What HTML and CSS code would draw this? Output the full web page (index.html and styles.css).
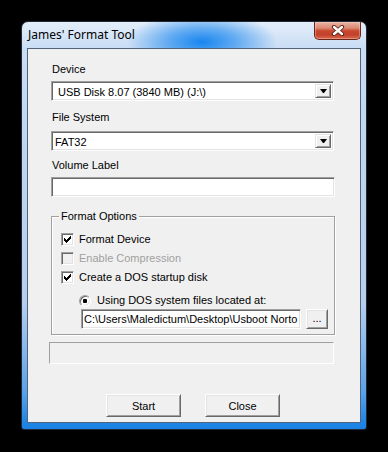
FILE: index.html
```html
<!DOCTYPE html>
<html>
<head>
<meta charset="utf-8">
<title>James' Format Tool</title>
<link rel="stylesheet" href="styles.css">
</head>
<body>
<div class="window">
  <div class="titlebar">
    <span class="title">James' Format Tool</span>
    <div class="close-btn">
      <svg width="14" height="11" viewBox="0 0 14 11">
        <path d="M3 2 L11 9 M11 2 L3 9" stroke="#5a1d14" stroke-width="4.2" stroke-linecap="round" fill="none"/>
        <path d="M3 2 L11 9 M11 2 L3 9" stroke="#ffffff" stroke-width="2.4" stroke-linecap="round" fill="none"/>
      </svg>
    </div>
  </div>
  <div class="client">
    <div class="form">
      <div class="lbl lbl--first">Device</div>
      <div class="combo">
        <span class="combo-text combo-text--device">USB Disk 8.07 (3840 MB) (J:\)</span>
        <span class="drop"><span class="tri"></span></span>
      </div>
      <div class="lbl lbl--fs">File System</div>
      <div class="combo combo--fs">
        <span class="combo-text">FAT32</span>
        <span class="drop"><span class="tri"></span></span>
      </div>
      <div class="lbl lbl--vol">Volume Label</div>
      <div class="edit edit--vol"></div>

      <fieldset class="group">
        <legend class="group-caption">Format Options</legend>
        <div class="group-body">
          <div class="row row--first">
            <span class="check">
              <svg width="7" height="7" viewBox="0 0 7 7" shape-rendering="crispEdges"><rect x="0" y="2" width="1" height="3"/><rect x="1" y="3" width="1" height="3"/><rect x="2" y="4" width="1" height="3"/><rect x="3" y="3" width="1" height="3"/><rect x="4" y="2" width="1" height="3"/><rect x="5" y="1" width="1" height="3"/><rect x="6" y="0" width="1" height="3"/></svg>
            </span>
            <span class="row-text">Format Device</span>
          </div>
          <div class="row">
            <span class="check check--disabled"></span>
            <span class="row-text row-text--disabled">Enable Compression</span>
          </div>
          <div class="row">
            <span class="check">
              <svg width="7" height="7" viewBox="0 0 7 7" shape-rendering="crispEdges"><rect x="0" y="2" width="1" height="3"/><rect x="1" y="3" width="1" height="3"/><rect x="2" y="4" width="1" height="3"/><rect x="3" y="3" width="1" height="3"/><rect x="4" y="2" width="1" height="3"/><rect x="5" y="1" width="1" height="3"/><rect x="6" y="0" width="1" height="3"/></svg>
            </span>
            <span class="row-text">Create a DOS startup disk</span>
          </div>
          <div class="row row--radio">
            <span class="radio"><span class="radio-dot"></span></span>
            <span class="row-text">Using DOS system files located at:</span>
          </div>
          <div class="path-row">
            <div class="edit edit--path"><span class="edit-text">C:\Users\Maledictum\Desktop\Usboot Norto</span></div>
            <div class="btn btn--browse">...</div>
          </div>
        </div>
      </fieldset>

      <div class="status"></div>
    </div>
    <div class="buttons">
      <div class="btn btn--main">Start</div>
      <div class="btn btn--main">Close</div>
    </div>
  </div>
</div>
</body>
</html>
```

FILE: styles.css
```css
html, body {
  margin: 0;
  padding: 0;
}

body {
  width: 388px;
  height: 452px;
  overflow: hidden;
  background: #000;
  font-family: "Liberation Sans", Arial, sans-serif;
  font-size: 11px;
  color: #000;
}

.window {
  box-sizing: border-box;
  margin: 21px 0 0 21px;
  width: 346px;
  height: 409px;
  border: 1px solid #1f2a36;
  border-radius: 7px 7px 3px 3px;
  padding: 0 5px 6px 5px;
  display: flex;
  flex-direction: column;
  background:
    radial-gradient(ellipse 75px 30px at 180px 20px, rgba(24, 134, 240, 1) 0%, rgba(60, 152, 240, 0.75) 45%, rgba(190, 218, 248, 0) 100%),
    linear-gradient(to bottom, #e4eefa 0px, #c9ddf4 26px, #bfd6f0 120px, #b6cfee 280px, #5aa2ea 370px, #1f86e6 400px, #1a80e2 409px);
  overflow: hidden;
}

.titlebar {
  height: 26px;
  display: flex;
  align-items: flex-start;
}

.title {
  font-family: "Noto Sans", "Open Sans", sans-serif;
  font-size: 12px;
  line-height: 16px;
  padding: 5px 0 0 1px;
  color: #000;
}

.close-btn {
  margin-left: auto;
  width: 47px;
  height: 18px;
  box-sizing: border-box;
  border: 1px solid #6a2619;
  border-top: none;
  border-radius: 0 0 5px 5px;
  background: linear-gradient(to bottom, #eab3a5 0%, #dc8a74 35%, #c8482f 52%, #c2412a 75%, #d9684c 100%);
  box-shadow: inset 0 0 0 1px rgba(255, 230, 220, 0.35);
  display: flex;
  align-items: center;
  justify-content: center;
}

.client {
  box-sizing: border-box;
  width: 334px;
  height: 375px;
  border: 1px solid #52637a;
  background: #f0f0f0;
  display: flex;
  flex-direction: column;
}

.form {
  padding-left: 23px;
  display: flex;
  flex-direction: column;
  align-items: flex-start;
}

.lbl {
  height: 13px;
  line-height: 13px;
  padding-left: 1px;
  white-space: nowrap;
}

.lbl--first { margin-top: 14px; }
.lbl--fs { margin-top: 10px; }
.lbl--vol { margin-top: 8px; }

/* sunken classic 3D field */
.combo,
.edit {
  box-sizing: border-box;
  height: 20px;
  border: 1px solid;
  border-color: #a0a0a0 #ffffff #ffffff #a0a0a0;
  box-shadow: inset 1px 1px 0 #696969, inset -1px -1px 0 #e3e3e3;
  background: #fff;
}

.combo {
  width: 283px;
  margin-top: 5px;
  padding: 2px;
  display: flex;
  align-items: stretch;
}

.combo--fs { margin-top: 7px; }

.combo-text {
  line-height: 16px;
  padding-left: 1px;
  white-space: nowrap;
}

.combo-text--device { padding-left: 4px; }

.drop {
  margin-left: auto;
  width: 16px;
  box-sizing: border-box;
  border: 1px solid;
  border-color: #e3e3e3 #696969 #696969 #e3e3e3;
  box-shadow: inset 1px 1px 0 #ffffff, inset -1px -1px 0 #a0a0a0;
  background: #f0f0f0;
  display: flex;
  align-items: center;
  justify-content: center;
}

.tri {
  width: 1px;
  height: 0;
  border-top: 4px solid #000;
  border-left: 3px solid transparent;
  border-right: 3px solid transparent;
}

.edit--vol {
  width: 284px;
  margin-top: 5px;
}

.group {
  box-sizing: border-box;
  width: 284px;
  margin: 13px 0 0 0;
  padding: 0;
  min-width: 0;
  border: 1px solid #a0a0a0;
  box-shadow: inset 1px 1px 0 #ffffff, 1px 1px 0 #ffffff;
}

.group-caption {
  margin-left: 7px;
  padding: 0 2px;
  line-height: 13px;
  height: 13px;
  background: #f0f0f0;
}

.group-body {
  padding: 0 0 5px 9px;
  display: flex;
  flex-direction: column;
  align-items: flex-start;
}

.row {
  display: flex;
  align-items: center;
  height: 13px;
  margin-top: 6px;
  gap: 5px;
}

.row--first { margin-top: 10px; }

.row--radio {
  margin-top: 10px;
  margin-left: 18px;
  gap: 6px;
}

.row-text {
  line-height: 13px;
  white-space: nowrap;
}

.row-text--disabled { color: #a0a0a0; }

.check {
  box-sizing: border-box;
  width: 13px;
  height: 13px;
  border: 1px solid;
  border-color: #a0a0a0 #ffffff #ffffff #a0a0a0;
  box-shadow: inset 1px 1px 0 #696969, inset -1px -1px 0 #e3e3e3;
  background: #fff;
  display: flex;
  align-items: center;
  justify-content: center;
}

.check svg { display: block; fill: #000; }

.check--disabled { background: #f0f0f0; }

.radio {
  box-sizing: border-box;
  width: 12px;
  height: 12px;
  border-radius: 50%;
  border: 1px solid;
  border-color: #a0a0a0 #ffffff #ffffff #a0a0a0;
  box-shadow: inset 1px 1px 0 #696969, inset -1px -1px 0 #e3e3e3;
  background: #fff;
  display: flex;
  align-items: center;
  justify-content: center;
}

.radio-dot {
  width: 4px;
  height: 4px;
  border-radius: 1px;
  background: #000;
}

.path-row {
  display: flex;
  margin-top: 2px;
  margin-left: 20px;
  gap: 5px;
}

.edit--path {
  width: 220px;
  overflow: hidden;
  padding-left: 2px;
}

.edit-text {
  display: block;
  line-height: 18px;
  white-space: nowrap;
}

/* raised classic button */
.btn {
  box-sizing: border-box;
  border: 1px solid;
  border-color: #ffffff #696969 #696969 #ffffff;
  box-shadow: inset 1px 1px 0 #e3e3e3, inset -1px -1px 0 #a0a0a0;
  background: #f0f0f0;
  display: flex;
  align-items: center;
  justify-content: center;
  white-space: nowrap;
}

.btn--browse {
  width: 22px;
  height: 20px;
  padding-bottom: 2px;
}

.status {
  box-sizing: border-box;
  width: 285px;
  height: 22px;
  margin: 7px 0 0 -2px;
  border: 1px solid;
  border-color: #a0a0a0 #ffffff #ffffff #a0a0a0;
}

.buttons {
  display: flex;
  gap: 24px;
  padding-left: 78px;
  margin-top: 30px;
}

.btn--main {
  width: 75px;
  height: 23px;
}
```
